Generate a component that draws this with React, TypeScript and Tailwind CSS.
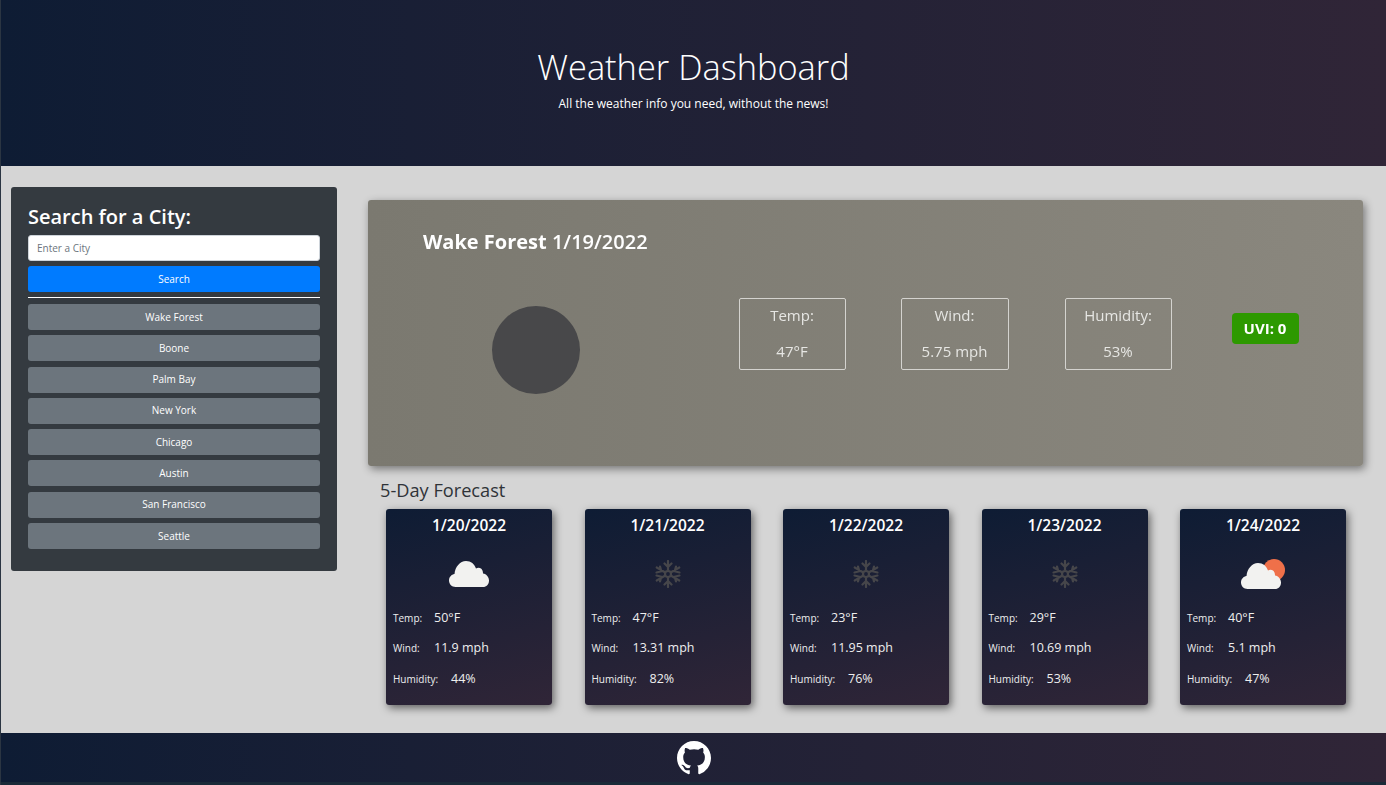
const font = { fontFamily: '"Open Sans", "Noto Sans", sans-serif' };

function Cloud({ className }: { className?: string }) {
  return (
    <svg viewBox="0 0 40 26" className={className}>
      <path
        fill="#f2f2f0"
        d="M6.500 26C3 26 0 23.200 0 19.500 0 16 2.500 13.500 5.500 13 6 6 11 0 17 0 22 0 25.500 3 27 7.500 28.500 6.500 30.500 6.500 32 7.500 33.500 8.500 34 10.500 34 12.500 37.500 13 40 16 40 19.500 40 23.500 37.500 26 34 26Z"
      />
    </svg>
  );
}

function Snow() {
  return (
    <svg viewBox="0 0 26 28" className="h-[28px] w-[26px]" stroke="#46464a" strokeWidth="2.200" fill="none" strokeLinecap="round">
      <circle cx="13" cy="14" r="3" />
      <path d="M13 1V10M13 18V27M9.500 3.500 13 7 16.500 3.500M9.500 24.500 13 21 16.500 24.500" />
      <path d="M1.700 7.500 9.500 12M16.500 16 24.300 20.500M1.500 12.500 6.300 11.200 5 6.500M24.500 15.500 19.700 16.800 21 21.500" />
      <path d="M24.300 7.500 16.500 12M9.500 16 1.700 20.500M24.500 12.500 19.700 11.200 21 6.500M1.500 15.500 6.300 16.800 5 21.500" />
    </svg>
  );
}

function PartlyCloudy() {
  return (
    <div className="relative h-[30px] w-[44px]">
      <div className="absolute right-0 top-0 h-[22px] w-[22px] rounded-full bg-[#ef7049]" />
      <Cloud className="absolute bottom-0 left-0 h-[26px] w-[40px]" />
    </div>
  );
}

const days = [
  { date: "1/20/2022", temp: "50°F", wind: "11.9 mph", hum: "44%", icon: <Cloud className="h-[26px] w-[40px]" /> },
  { date: "1/21/2022", temp: "47°F", wind: "13.31 mph", hum: "82%", icon: <Snow /> },
  { date: "1/22/2022", temp: "23°F", wind: "11.95 mph", hum: "76%", icon: <Snow /> },
  { date: "1/23/2022", temp: "29°F", wind: "10.69 mph", hum: "53%", icon: <Snow /> },
  { date: "1/24/2022", temp: "40°F", wind: "5.1 mph", hum: "47%", icon: <PartlyCloudy /> },
];

const cities = ["Wake Forest", "Boone", "Palm Bay", "New York", "Chicago", "Austin", "San Francisco", "Seattle"];

function Stat({ label, value, w }: { label: string; value: string; w: string }) {
  return (
    <div className={`${w} flex h-[72px] flex-col items-center justify-between rounded-[2px] border border-[#d4d3cf] px-1 pb-[6px] pt-[4px] text-[15px] leading-[24px] text-[#e6e6e3]`}>
      <span>{label}</span>
      <span>{value}</span>
    </div>
  );
}

function Row({ label, value, lw, mt }: { label: string; value: string; lw: string; mt: string }) {
  return (
    <div className={`flex items-center ${mt}`}>
      <span className={`${lw} text-[10px] leading-[20px] text-[#eeeeee]`}>{label}</span>
      <span className="text-[12.500px] leading-[20px] text-[#eeeeee]">{value}</span>
    </div>
  );
}

export default function App() {
  return (
    <div style={font} className="flex h-[785px] w-[1386px] flex-col overflow-hidden border-l border-[#2b3542] bg-[#d5d5d5]">
      <header className="flex h-[166px] shrink-0 flex-col items-center bg-gradient-to-r from-[#0e1c34] to-[#302537] pt-[41px] text-white">
        <h1 className="text-[34.400px] font-light leading-[52px]">Weather Dashboard</h1>
        <p className="mt-[2px] text-[12px] leading-[18px]">All the weather info you need, without the news!</p>
      </header>

      <main className="flex h-[567px] shrink-0">
        <div className="w-[367px] shrink-0 pl-[10px] pt-[21px]">
          <aside className="flex h-[384px] w-[326px] flex-col rounded-[3px] bg-[#343a40] px-[17px] pt-[16px]">
            <h2 className="text-[20px] font-semibold leading-[28px] text-white">Search for a City:</h2>
            <input
              placeholder="Enter a City"
              className="mt-[4px] h-[26px] w-full rounded-[3px] border border-[#ced4da] bg-white px-[8px] text-[10px] text-[#495057] placeholder:text-[#6c757d]"
            />
            <button className="mt-[5px] h-[26px] w-full rounded-[3px] bg-[#007bff] text-[10px] text-white">Search</button>
            <hr className="mt-[5px] border-t border-white" />
            <div className="mt-[6px] flex flex-col gap-[5.300px]">
              {cities.map((c) => (
                <button key={c} className="h-[26px] w-full rounded-[3px] bg-[#6c757d] text-[10px] text-white">
                  {c}
                </button>
              ))}
            </div>
          </aside>
        </div>

        <div className="w-[995px] shrink-0 pt-[34px]">
          <section className="h-[266px] rounded-[3px] bg-gradient-to-r from-[#7b7970] to-[#8a877e] px-[55px] pt-[27px] shadow-[2px_3px_8px_rgba(0,0,0,0.45)] blur-[0.5px]">
            <h2 className="text-[20px] leading-[30px] text-white">
              <span className="font-bold">Wake Forest</span> <span className="font-semibold">1/19/2022</span>
            </h2>
            <div className="mt-[17px] flex items-center">
              <div className="ml-[69px] mt-[32px] h-[88px] w-[88px] shrink-0 rounded-full bg-[#48484a]" />
              <div className="ml-[158.500px] flex items-start">
                <Stat label="Temp:" value="47°F" w="w-[107px]" />
                <div className="ml-[55px]">
                  <Stat label="Wind:" value="5.75 mph" w="w-[108px]" />
                </div>
                <div className="ml-[56px]">
                  <Stat label="Humidity:" value="53%" w="w-[107px]" />
                </div>
                <div className="ml-[60px] mt-[15px] flex h-[31px] w-[67px] items-center justify-center rounded-[4px] bg-[#2d9900] text-[15px] font-bold text-white">
                  UVI: 0
                </div>
              </div>
            </div>
          </section>

          <h3 className="ml-[12px] mt-[10px] text-[18.200px] leading-[28px] text-[#2f3338]">5-Day Forecast</h3>
          <div className="ml-[18px] mt-[5px] flex w-[960px] justify-between">
            {days.map((d) => (
              <article
                key={d.date}
                className="flex h-[196px] w-[166px] flex-col rounded-[3px] bg-[linear-gradient(165deg,#0e1c34,#302537)] px-[7px] pt-[4px] shadow-[2px_3px_8px_rgba(0,0,0,0.55)]"
              >
                <div className="text-center text-[15.500px] font-semibold leading-[24px] text-white">{d.date}</div>
                <div className="mt-[19px] flex h-[36px] items-center justify-center">{d.icon}</div>
                <Row label="Temp:" value={d.temp} lw="w-[41px]" mt="mt-[16px]" />
                <Row label="Wind:" value={d.wind} lw="w-[41px]" mt="mt-[10px]" />
                <Row label="Humidity:" value={d.hum} lw="w-[58px]" mt="mt-[11px]" />
              </article>
            ))}
          </div>
        </div>
      </main>

      <footer className="flex h-[49px] shrink-0 items-center justify-center bg-gradient-to-r from-[#0e1c34] to-[#302537]">
        <svg viewBox="0 0 16 16" className="h-[34px] w-[34px]" fill="#ffffff">
          <path d="M8 0C3.580 0 0 3.580 0 8c0 3.540 2.290 6.530 5.470 7.590.4.070.55-.17.55-.38 0-.19-.01-.82-.01-1.490-2.010.37-2.530-.49-2.690-.94-.09-.23-.48-.94-.82-1.130-.28-.15-.68-.52-.01-.53.63-.01 1.080.58 1.230.82.72 1.210 1.870.87 2.330.66.070-.52.28-.87.51-1.070-1.780-.2-3.640-.89-3.640-3.950 0-.87.310-1.590.820-2.150-.08-.2-.36-1.020.08-2.120 0 0 .67-.21 2.200.82.64-.18 1.320-.27 2-.27s1.360.09 2 .27c1.530-1.040 2.200-.82 2.200-.82.44 1.100.16 1.920.08 2.120.51.56.82 1.270.82 2.150 0 3.070-1.870 3.750-3.650 3.950.29.25.54.73.54 1.480 0 1.070-.01 1.930-.01 2.200 0 .21.15.46.55.38A8.010 8.010 0 0 0 16 8c0-4.420-3.580-8-8-8z" />
        </svg>
      </footer>
      <div className="h-[3px] shrink-0 bg-[#1a2a38]" />
    </div>
  );
}
